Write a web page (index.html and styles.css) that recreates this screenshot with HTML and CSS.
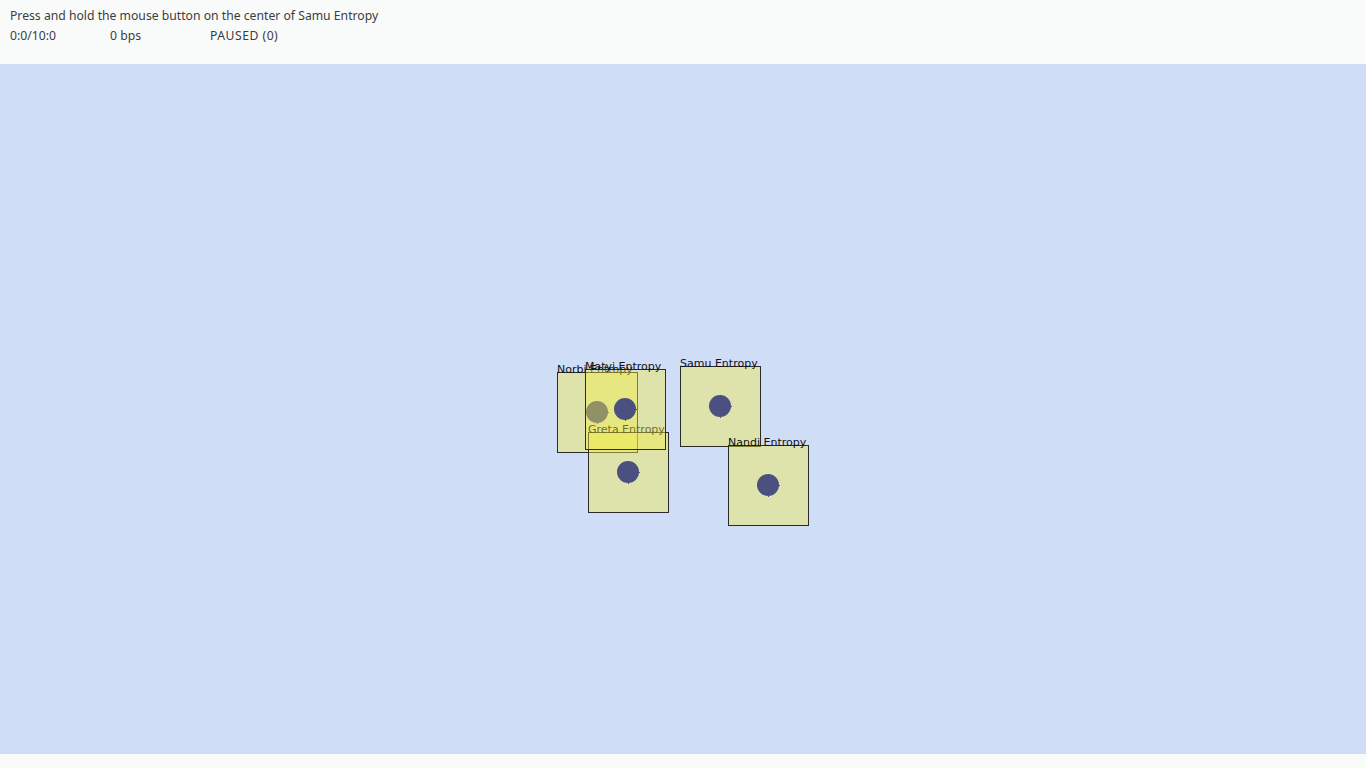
FILE: index.html
```html
<!DOCTYPE html>
<html>
<head>
<meta charset="utf-8">
<link rel="stylesheet" href="styles.css">
</head>
<body>
<header class="hud">
  <div class="hint">Press and hold the mouse button on the center of Samu Entropy</div>
  <div class="stats">
    <span class="stat">0:0/10:0</span>
    <span class="stat">0 bps</span>
    <span class="stat">PAUSED (0)</span>
  </div>
</header>
<main class="stage">
  <svg class="field" width="1366" height="690" viewBox="0 64 1366 690">
    <g class="ent">
      <rect class="box" x="557.5" y="372.5" width="80" height="80"/>
      <circle class="dot" cx="597" cy="412" r="11"/>
      <path class="tick" d="M597 400.5v2M597 421.5v2M585.5 412h2M606.5 412h2"/>
      <text class="lbl" x="557" y="373">Norbi Entropy</text>
    </g>
    <g class="ent">
      <rect class="box" x="588.5" y="432.5" width="80" height="80"/>
      <circle class="dot" cx="628" cy="472" r="11"/>
      <path class="tick" d="M628 460.5v2M628 481.5v2M616.5 472h2M637.5 472h2"/>
      <text class="lbl" x="588" y="433">Greta Entropy</text>
    </g>
    <g class="ent">
      <rect class="box" x="585.5" y="369.5" width="80" height="80"/>
      <circle class="dot" cx="625" cy="409" r="11"/>
      <path class="tick" d="M625 397.5v2M625 418.5v2M613.5 409h2M634.5 409h2"/>
      <text class="lbl" x="585" y="370">Matyi Entropy</text>
    </g>
    <g class="ent">
      <rect class="box" x="680.5" y="366.5" width="80" height="80"/>
      <circle class="dot" cx="720" cy="406" r="11"/>
      <path class="tick" d="M720 394.5v2M720 415.5v2M708.5 406h2M729.5 406h2"/>
      <text class="lbl" x="680" y="367">Samu Entropy</text>
    </g>
    <g class="ent">
      <rect class="box" x="728.5" y="445.5" width="80" height="80"/>
      <circle class="dot" cx="768" cy="485" r="11"/>
      <path class="tick" d="M768 473.5v2M768 494.5v2M756.5 485h2M777.5 485h2"/>
      <text class="lbl" x="728" y="446">Nandi Entropy</text>
    </g>
  </svg>
</main>
<footer class="foot"></footer>
</body>
</html>
```

FILE: styles.css
```css
html, body {
  margin: 0;
  padding: 0;
  background: #f9fbfa;
  overflow: hidden;
}
.hud {
  height: 64px;
  box-sizing: border-box;
  padding: 6px 10px 0;
  font-family: "Noto Sans", "Open Sans", sans-serif;
  font-size: 12.2px;
  line-height: 19px;
  color: #3c3c3c;
  background: #f9fbfa;
}
.stats {
  display: flex;
  margin-top: 1px;
}
.stat {
  width: 100px;
}
.stat:last-child {
  letter-spacing: 0.5px;
}
.stage {
  height: 690px;
  background: #d0ddf6;
}
.field {
  display: block;
}
.box {
  fill: rgba(240, 236, 70, 0.42);
  stroke: #2b2b2a;
  stroke-width: 1;
  shape-rendering: crispEdges;
}
.dot {
  fill: #4b5080;
}
.tick {
  stroke: #4b5080;
  stroke-width: 1;
  shape-rendering: crispEdges;
}
.lbl {
  font-family: "DejaVu Sans", sans-serif;
  font-size: 11px;
  fill: #111;
}
.foot {
  height: 14px;
  background: #f9fbfa;
}
```
